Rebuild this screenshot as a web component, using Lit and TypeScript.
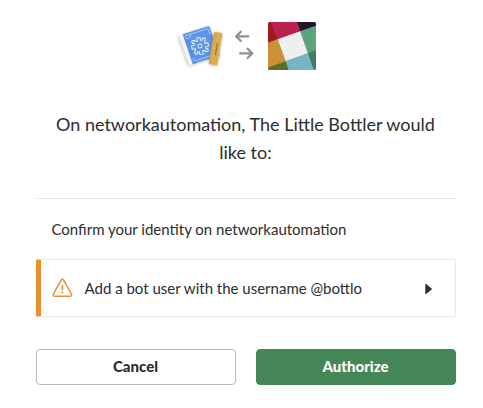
import { LitElement, html, css } from "lit";
import { customElement } from "lit/decorators.js";

@customElement("app-root")
export class AppRoot extends LitElement {
  static styles = css`
    :host {
      display: block;
      box-sizing: border-box;
      height: 408px;
      padding: 15px 27px 0 36px;
      overflow: hidden;
      background: #fff;
      color: #2c2d30;
      font-family: Lato, "Open Sans", sans-serif;
    }
    .brands {
      display: flex;
      height: 60px;
      padding-left: 134px;
    }
    svg { display: block; flex: none; }
    .arrows { margin: 13px 0 0 4px; }
    .team { margin: 7px 0 0 14px; border-radius: 2px; }
    h1 {
      margin: 35px 1px 32px 0;
      font-size: 18px;
      line-height: 28px;
      font-weight: 400;
      text-align: center;
    }
    .scopes {
      border-top: 1px solid #e5e5e5;
      font-size: 15px;
      line-height: 24px;
    }
    .identity { padding: 18px 15px 18px 15.5px; }
    .bot {
      display: flex;
      align-items: center;
      box-sizing: border-box;
      height: 58px;
      border: 1px solid #e5e5e5;
      border-left: 5px solid #eb902e;
      border-radius: 2px;
      padding: 0 22px 0 11px;
    }
    .label { flex: 1; margin-left: 11.5px; }
    .caret { margin-top: 1px; }
    .actions { display: flex; gap: 20px; margin-top: 32px; }
    button {
      flex: 1;
      box-sizing: border-box;
      height: 36px;
      padding: 0 1px 2px 0;
      border: 1px solid #b8b8bb;
      border-radius: 4px;
      background: #fff;
      color: #2c2d30;
      font: 900 15px/32px Lato, "Open Sans", sans-serif;
    }
    .primary { background: #458756; border-color: #458756; color: #fff; }
  `;

  render() {
    return html`
      <div class="brands">
        <svg width="60" height="60" viewBox="0 0 180 180">
          <defs>
            <filter id="shade" x="-20%" y="-20%" width="140%" height="140%">
              <feDropShadow dx="0" dy="2" stdDeviation="4" flood-opacity=".3" />
            </filter>
          </defs>
          <g filter="url(#shade)">
            <path d="M24 63L38 58 68 147 55 152Z" fill="#f4f4f4" />
            <path d="M38 58L114 34Q118 33 119 37L148 119Q149 122 145 123L68 147Z" fill="#5b93e6" />
          </g>
          <path d="M48 60L76 147" stroke="#4a80d6" stroke-width="2" />
          <path d="M26 65L56 151" stroke="#d5d5d5" stroke-width="3" />
          <g fill="none" stroke="#8db5ef" stroke-width="1" opacity=".5">
            <path d="M59 52L88 141M78 46L108 135M98 40L127 129M45 77L122 54M52 98L129 75M59 119L136 96" />
          </g>
          <path d="M46 62L114 41 120 58M46 62L50 71 59 68 63 58M73 138L128 120M73 138L69 128" fill="none" stroke="#b8d2f7" stroke-width="2.5" />
          <g transform="translate(90 93) rotate(-8)" fill="none" stroke="#e6f0fe" stroke-width="3" stroke-linejoin="round">
            <path d="M-6-25H4V-17H10V-22H18V-13H15V-6H25V4H17V11H22V19H13V15H6V25H-4V17H-10V22H-18V13H-15V6H-25V-4H-17V-11H-22V-19H-13V-15H-6Z" />
            <rect x="-5.5" y="-5.5" width="11" height="11" stroke-width="2.5" />
          </g>
          <path d="M135 50L156 54Q158 55 157 57L142 149Q141 152 138 151L118 147Q116 146 116 144L132 52Q133 50 135 50Z" fill="#dbab51" filter="url(#shade)" />
          <path d="M131 58l5 1M130 66l4 1M128 74l5 1M127 82l4 1M126 90l5 1M124 98l4 1M123 106l5 1M121 114l4 1M120 122l5 1M119 130l4 1M118 138l5 1" stroke="#b48839" stroke-width="2" />
          <path d="M142 86L136 121" stroke="#8e6c30" stroke-width="4" stroke-dasharray="3 1" />
        </svg>
        <svg class="arrows" width="20" height="34" viewBox="0 0 20 34" fill="none" stroke="#929091" stroke-width="2.3" stroke-linecap="round" stroke-linejoin="round">
          <path d="M14.2 8.4H2.3M6.8 3.8L2.2 8.4 6.8 13M6.2 25.4H18M13.6 20.8L18.2 25.4 13.6 30" />
        </svg>
        <svg class="team" width="48" height="48" viewBox="0 0 48 48">
          <rect width="48" height="48" fill="#78846b" />
          <path d="M0 0H3L9.7 17.3 0 20.7Z" fill="#a0191d" />
          <path d="M3 0H29L32.3 9.3 9.7 17.3Z" fill="#bd1f51" />
          <path d="M29 0H48V3.7L32.3 9.3Z" fill="#24142c" />
          <path d="M0 20.7L9.7 17.3 17.7 39.3 0 45.7Z" fill="#cb9134" />
          <path d="M9.7 17.3L32.3 9.3 40 31.3 17.7 39.3Z" fill="#f0eff0" />
          <path d="M32.3 9.3L48 3.7V28.3L40 31.3Z" fill="#5ba47c" />
          <path d="M0 45.7L17.7 39.3 20.7 48H0Z" fill="#5b6f29" />
          <path d="M17.7 39.3L40 31.3 46 48H20.7Z" fill="#78b4c8" />
          <path d="M40 31.3L48 28.3V48H46Z" fill="#417d66" />
        </svg>
      </div>
      <h1>On networkautomation, The Little Bottler would<br />like to:</h1>
      <div class="scopes">
        <div class="identity">Confirm your identity on networkautomation</div>
        <div class="bot">
          <svg width="21" height="20" viewBox="0 0 21 20" fill="none" stroke="#eb902e" stroke-width="1.5" stroke-linecap="round">
            <path d="M9.1 2.2Q10.4.4 11.7 2.2L19.4 16Q20.2 18.2 18 18.2H2.8Q.6 18.2 1.4 16Z" stroke-linejoin="round" />
            <path d="M10.4 8V11.3M10.4 14.2V14.4" stroke-width="1.8" />
          </svg>
          <span class="label">Add a bot user with the username @bottlo</span>
          <svg class="caret" width="8" height="12" viewBox="0 0 8 12"><path d="M.3 1.4Q.3.6 1.1 1L6.6 5.4Q7.2 6 6.6 6.6L1.1 11Q.3 11.4 .3 10.6Z" fill="#2c2d30" /></svg>
        </div>
      </div>
      <div class="actions">
        <button>Cancel</button>
        <button class="primary">Authorize</button>
      </div>
    `;
  }
}
